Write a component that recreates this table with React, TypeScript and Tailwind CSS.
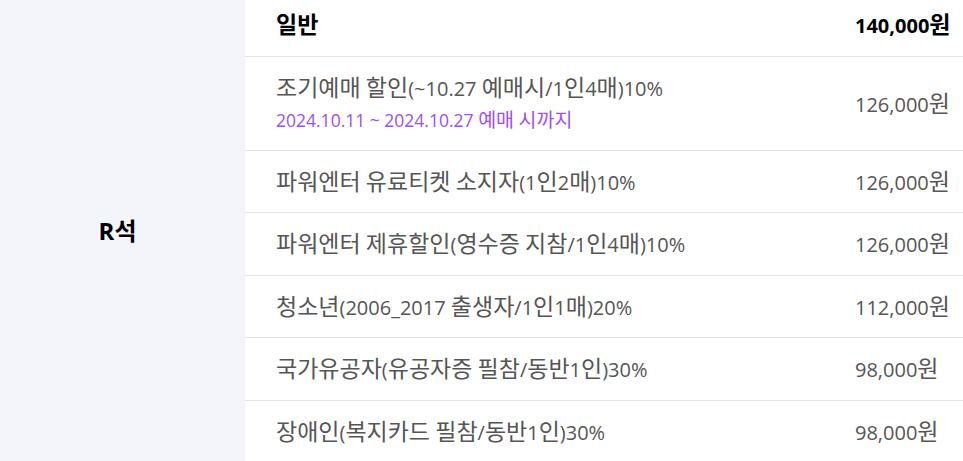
import React from "react";

function K({ text, k }: { text: string; k: string }) {
  const parts = text.split(/([\uAC00-\uD7A3]+)/);
  return (
    <>
      {parts.map((p, i) =>
        /[\uAC00-\uD7A3]/.test(p) ? (
          <span key={i} className={k}>
            {p}
          </span>
        ) : (
          <React.Fragment key={i}>{p}</React.Fragment>
        )
      )}
    </>
  );
}

const rows = [
  { name: "파워엔터 유료티켓 소지자(1인2매)10%", price: "126,000원", h: "h-[62px]" },
  { name: "파워엔터 제휴할인(영수증 지참/1인4매)10%", price: "126,000원", h: "h-[63px]" },
  { name: "청소년(2006_2017 출생자/1인1매)20%", price: "112,000원", h: "h-[62px]" },
  { name: "국가유공자(유공자증 필참/동반1인)30%", price: "98,000원", h: "h-[63px]" },
];

const HK = "text-[23px]";

export default function App() {
  return (
    <div
      className="flex w-[963px] h-[461px] overflow-hidden bg-white"
      style={{ fontFamily: '"Open Sans", "Noto Sans CJK KR", sans-serif' }}
    >
      <div className="w-[245px] shrink-0 bg-[#f4f5fa] flex items-center justify-center pr-[10px]">
        <span className="text-[24px] font-bold text-black leading-[28px]">
          <K text="R석" k="text-[24px]" />
        </span>
      </div>
      <div className="flex-1 flex flex-col">
        <div className="h-[57px] shrink-0 flex items-center border-b border-[#e1e4ea] pb-[6px]">
          <div className="flex-1 pl-[31px] text-[20px] font-bold text-black leading-[26px]">
            <K text="일반" k={HK} />
          </div>
          <div className="w-[108px] text-[20px] font-bold text-black leading-[26px]">
            <K text="140,000원" k={HK} />
          </div>
        </div>
        <div className="h-[94px] shrink-0 flex items-center border-b border-[#e1e4ea]">
          <div className="flex-1 pl-[31px] flex flex-col pb-[2px]">
            <div className="text-[20px] text-[#555555] leading-[26px]">
              <K text="조기예매 할인(~10.27 예매시/1인4매)10%" k={HK} />
            </div>
            <div className="text-[17.5px] text-[#9d4ef5] leading-[22px] mt-[7px]">
              <K text="2024.10.11 ~ 2024.10.27 예매 시까지" k="text-[19.5px]" />
            </div>
          </div>
          <div className="w-[108px] text-[20px] text-[#555555] leading-[26px]">
            <K text="126,000원" k={HK} />
          </div>
        </div>
        {rows.map((r) => (
          <div key={r.name} className={`${r.h} shrink-0 flex items-center border-b border-[#e1e4ea]`}>
            <div className="flex-1 pl-[31px] text-[20px] text-[#555555] leading-[26px]">
              <K text={r.name} k={HK} />
            </div>
            <div className="w-[108px] text-[20px] text-[#555555] leading-[26px]">
              <K text={r.price} k={HK} />
            </div>
          </div>
        ))}
        <div className="h-[62px] shrink-0 flex items-center">
          <div className="flex-1 pl-[31px] text-[20px] text-[#555555] leading-[26px]">
            <K text="장애인(복지카드 필참/동반1인)30%" k={HK} />
          </div>
          <div className="w-[108px] text-[20px] text-[#555555] leading-[26px]">
            <K text="98,000원" k={HK} />
          </div>
        </div>
      </div>
    </div>
  );
}
